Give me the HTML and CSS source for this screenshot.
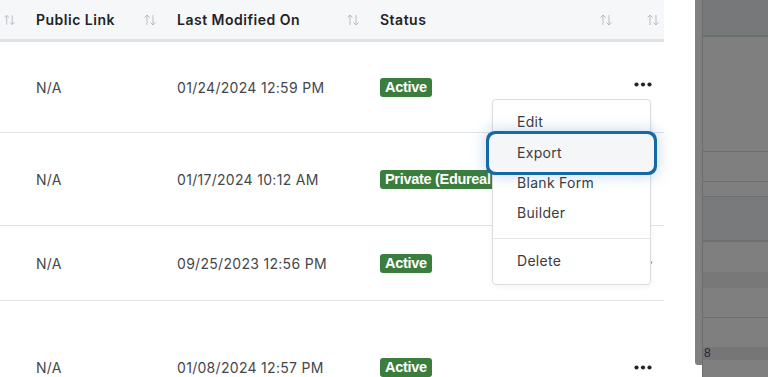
FILE: index.html
```html
<!DOCTYPE html>
<html lang="en">
<head>
    <meta charset="UTF-8">
    <meta name="viewport" content="width=device-width, initial-scale=1.0">
    <title>Forms</title>
    <link rel="stylesheet" href="styles.css">
</head>
<body>

<div class="page">
    <div class="table-wrap">
        <table class="forms-table">
            <thead>
                <tr>
                    <th class="col-cut"><div class="th-inner"><span></span><svg class="sort" viewBox="0 0 14 12"><path d="M4 11V1M1.5 3.5L4 1l2.5 2.5M10 1v10M7.5 8.5L10 11l2.5-2.5"/></svg></div></th>
                    <th class="col-link"><div class="th-inner"><span>Public Link</span><svg class="sort" viewBox="0 0 14 12"><path d="M4 11V1M1.5 3.5L4 1l2.5 2.5M10 1v10M7.5 8.5L10 11l2.5-2.5"/></svg></div></th>
                    <th class="col-date"><div class="th-inner"><span>Last Modified On</span><svg class="sort" viewBox="0 0 14 12"><path d="M4 11V1M1.5 3.5L4 1l2.5 2.5M10 1v10M7.5 8.5L10 11l2.5-2.5"/></svg></div></th>
                    <th class="col-status"><div class="th-inner"><span>Status</span><svg class="sort" viewBox="0 0 14 12"><path d="M4 11V1M1.5 3.5L4 1l2.5 2.5M10 1v10M7.5 8.5L10 11l2.5-2.5"/></svg></div></th>
                    <th class="col-actions"><div class="th-inner"><span></span><svg class="sort" viewBox="0 0 14 12"><path d="M4 11V1M1.5 3.5L4 1l2.5 2.5M10 1v10M7.5 8.5L10 11l2.5-2.5"/></svg></div></th>
                </tr>
            </thead>
            <tbody>
                <tr class="row-1">
                    <td></td>
                    <td>N/A</td>
                    <td>01/24/2024 12:59 PM</td>
                    <td><span class="badge">Active</span></td>
                    <td class="actions"><svg class="dots" viewBox="0 0 18 5"><circle cx="2.5" cy="2.5" r="2.1"/><circle cx="9" cy="2.5" r="2.1"/><circle cx="15.5" cy="2.5" r="2.1"/></svg></td>
                </tr>
                <tr class="row-2">
                    <td></td>
                    <td>N/A</td>
                    <td>01/17/2024 10:12 AM</td>
                    <td class="status-clip"><span class="badge">Private (Edureal Admin)</span></td>
                    <td class="actions"></td>
                </tr>
                <tr class="row-3">
                    <td></td>
                    <td>N/A</td>
                    <td>09/25/2023 12:56 PM</td>
                    <td><span class="badge">Active</span></td>
                    <td class="actions"><svg class="dots" viewBox="0 0 18 5"><circle cx="2.5" cy="2.5" r="2.1"/><circle cx="9" cy="2.5" r="2.1"/><circle cx="15.5" cy="2.5" r="2.1"/></svg></td>
                </tr>
                <tr class="row-4">
                    <td></td>
                    <td>N/A</td>
                    <td>01/08/2024 12:57 PM</td>
                    <td><span class="badge">Active</span></td>
                    <td class="actions"><svg class="dots" viewBox="0 0 18 5"><circle cx="2.5" cy="2.5" r="2.1"/><circle cx="9" cy="2.5" r="2.1"/><circle cx="15.5" cy="2.5" r="2.1"/></svg></td>
                </tr>
            </tbody>
        </table>

        <!-- menu azioni aperto sulla prima riga -->
        <ul class="menu">
            <li class="menu-item">Edit</li>
            <li class="menu-item focused">Export</li>
            <li class="menu-item">Blank Form</li>
            <li class="menu-item">Builder</li>
            <li class="menu-divider"></li>
            <li class="menu-item">Delete</li>
        </ul>
    </div>

    <div class="side">
        <div class="side-strip"></div>
        <div class="side-grid">
            <div class="side-row s-top"></div>
            <div class="side-row s-a"></div>
            <div class="side-row s-b"></div>
            <div class="side-row s-c"></div>
            <div class="side-row s-d"></div>
            <div class="side-row s-e"></div>
            <div class="side-row s-f"></div>
            <div class="side-row s-g"></div>
            <div class="side-row s-h"></div>
            <div class="side-row s-num">8</div>
            <div class="side-row s-end"></div>
        </div>
    </div>
</div>

</body>
</html>
```

FILE: styles.css
```css
body {
    margin: 0;
    padding: 0;
    background-color: #ffffff;
    font-family: Inter, "Noto Sans", sans-serif;
    overflow: hidden;
}
.page {
    display: flex;
    height: 377px;
    overflow: hidden;
}
.table-wrap {
    position: relative;
    width: 664px;
    flex-shrink: 0;
}
.forms-table {
    width: 664px;
    border-collapse: collapse;
    table-layout: fixed;
}
.forms-table th {
    padding: 0;
    height: 39px;
    background-color: #f6f7f9;
    border-bottom: 3px solid #dfe1e6;
    font-size: 14px;
    font-weight: 600;
    letter-spacing: 0.5px;
    color: #1f2227;
    text-align: left;
}
.th-inner {
    display: flex;
    align-items: center;
    justify-content: space-between;
    padding: 0 4px 0 16px;
}
.col-cut { width: 20px; }
.col-cut .th-inner { padding: 0 4px 0 3px; }
.col-link { width: 141px; }
.col-date { width: 203px; }
.col-status { width: 253px; }
.col-actions { width: 47px; }
.sort {
    width: 14px;
    height: 12px;
    fill: none;
    stroke: #b7bbc1;
    stroke-width: 1;
}
.forms-table td {
    padding: 0 0 0 16px;
    border-bottom: 1px solid #e1e2e5;
    font-size: 14px;
    letter-spacing: 0.3px;
    color: #45474b;
    vertical-align: middle;
    white-space: nowrap;
    overflow: hidden;
}
.forms-table td:first-child { padding: 0; }
.row-1 td { height: 90px; }
.row-2 td { height: 92px; }
.row-3 td { height: 74px; }
.row-4 td { height: 132px; border-bottom: none; }
.badge {
    display: inline-block;
    background-color: #3b7d3d;
    color: #ffffff;
    font-family: "Liberation Sans", Arial, sans-serif;
    font-weight: 700;
    font-size: 14.5px;
    line-height: 19px;
    letter-spacing: -0.3px;
    padding: 0 5px;
    border-radius: 3px;
}
/* il badge lungo finisce sotto il menu */
.status-clip .badge {
    max-width: 102px;
    overflow: hidden;
    vertical-align: middle;
    border-radius: 3px 0 0 3px;
}
.actions {
    text-align: right;
}
.forms-table td.actions { padding: 0 12px 0 0; }
.dots {
    width: 18px;
    height: 5px;
    fill: #222326;
    display: block;
    margin-left: auto;
}
.row-1 .dots { margin-top: -5px; }
.row-3 .dots { margin-top: -2px; }
.menu {
    position: absolute;
    left: 492px;
    top: 99px;
    width: 157px;
    margin: 0;
    padding: 8px 0;
    list-style: none;
    background-color: #ffffff;
    border: 1px solid #dcdde0;
    border-radius: 4px;
    box-shadow: 0 2px 6px rgba(0, 0, 0, 0.05);
}
.menu-item {
    height: 30px;
    line-height: 30px;
    padding-left: 24px;
    font-size: 14px;
    letter-spacing: 0.3px;
    color: #3a3c40;
}
.menu-item:first-child { line-height: 28px; }
.menu-item.focused {
    position: relative;
    background-color: #f5f6f8;
    border-radius: 3px;
    box-shadow: 0 0 0 4px #f5f6f8, 0 0 0 7px #1769a6, 0 0 14px 9px rgba(40, 120, 185, 0.22);
}
.menu-divider {
    height: 1px;
    margin: 10px 0 7px;
    background-color: #e3e4e7;
}
.side {
    display: flex;
    margin-left: 31px;
    flex: 1;
}
.side-strip {
    width: 7px;
    height: 365px;
    background-color: #808080;
    border-radius: 0 0 0 3px;
}
.side-grid {
    flex: 1;
    border-left: 1px solid #6c6d6d;
    background-color: #7f7f7f;
}
.side-row {
    border-bottom: 1px solid #6e6e6e;
    box-sizing: border-box;
}
.s-top { height: 37px; background-color: #77787a; border-bottom: 2px solid #6a7270; }
.s-a { height: 115px; }
.s-b { height: 30px; }
.s-c { height: 15px; }
.s-d { height: 45px; background-color: #797a7b; border-bottom: 2px solid #717171; }
.s-e { height: 30px; border-bottom: none; }
.s-f { height: 16px; background-color: #787878; border-bottom: none; }
.s-g { height: 30px; }
.s-h { height: 29px; border-bottom: none; }
.s-num {
    height: 13px;
    background-color: #767676;
    border-bottom: none;
    font-family: "Liberation Sans", Arial, sans-serif;
    font-size: 12px;
    line-height: 13px;
    color: #1d2736;
    padding-left: 1px;
}
.s-end { border-bottom: none; }
```
